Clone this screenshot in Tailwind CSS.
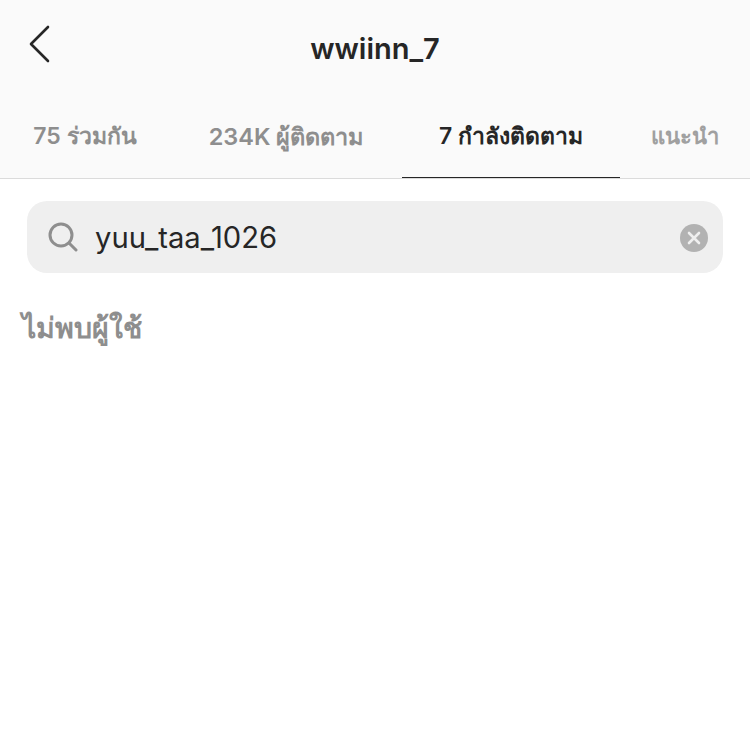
<!DOCTYPE html>
<html lang="en">
	<head>
		<meta charset="UTF-8" />
		<meta name="viewport" content="width=device-width, initial-scale=1.0" />
		<title>Document</title>
		<script src="https://cdn.jsdelivr.net/npm/@tailwindcss/browser@4"></script>
	</head>
	<body class="bg-white font-['Inter','Noto_Sans','DejaVu_Sans',sans-serif]">
		<div class="w-[750px] h-[750px] overflow-hidden">
			<div class="bg-[#fafafa] border-b border-[#dbdbdb] h-[179px]">
				<!-- top bar -->
				<div class="relative flex h-[98px] items-center justify-center">
					<svg class="absolute left-[28px] top-[25px] h-[38px] w-[24px]" viewBox="0 0 24 38" fill="none" stroke="#262626" stroke-width="2.6" stroke-linecap="round" stroke-linejoin="round">
						<path d="M20 2 L3 19 L20 36" />
					</svg>
					<span class="text-[29px] font-semibold text-[#262626]">wwiinn_7</span>
				</div>
				<!-- tabs -->
				<div class="flex h-[81px] items-start">
					<div class="flex h-[80px] w-[170px] items-center justify-center pb-[3px] text-[23px] font-semibold text-[#8e8e8e]">75 ร่วมกัน</div>
					<div class="flex h-[80px] w-[232px] items-center justify-center pb-[3px] text-[23.5px] font-semibold text-[#8e8e8e]">234K ผู้ติดตาม</div>
					<div class="flex h-[80px] w-[218px] items-center justify-center border-b border-[#262626] pb-[2px] text-[23px] font-semibold text-[#262626]">7 กำลังติดตาม</div>
					<div class="flex h-[80px] flex-1 items-center justify-center pb-[3px] text-[22px] font-semibold text-[#a0a0a0]">แนะนำ</div>
				</div>
			</div>
			<!-- search -->
			<div class="px-[27px] pt-[22px]">
				<div class="flex h-[72px] items-center rounded-[20px] bg-[#efefef] pl-[21px] pr-[15px]">
					<svg class="h-[30px] w-[30px] shrink-0" viewBox="0 0 30 30" fill="none" stroke="#8e8e8e" stroke-width="3" stroke-linecap="round">
						<circle cx="13" cy="13" r="11" />
						<path d="M21 21 L28 28" />
					</svg>
					<span class="ml-[17px] pt-[1px] text-[29.2px] text-[#262626]">yuu_taa_1026</span>
					<div class="ml-auto mt-[1px] flex h-[28px] w-[28px] items-center justify-center rounded-full bg-[#b2b2b2]">
						<svg class="h-[14px] w-[14px]" viewBox="0 0 14 14" fill="none" stroke="#efefef" stroke-width="2.6" stroke-linecap="round">
							<path d="M2 2 L12 12 M12 2 L2 12" />
						</svg>
					</div>
				</div>
			</div>
			<div class="pl-[22px] pt-[33px] text-[28.5px] leading-[44px] font-bold text-[#8e8e8e]">ไม่พบผู้ใช้</div>
		</div>
	</body>
</html>
